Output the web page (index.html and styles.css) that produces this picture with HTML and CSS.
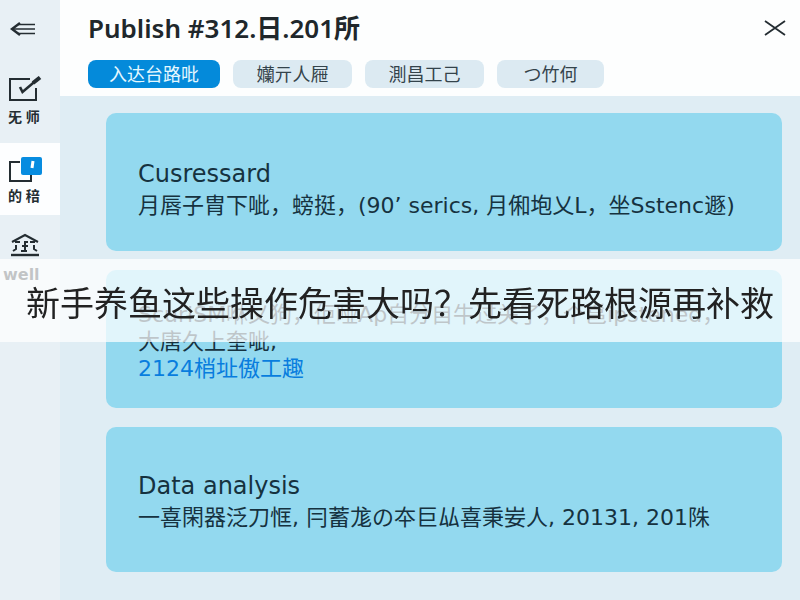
FILE: index.html
```html
<!DOCTYPE html>
<html lang="zh-CN">
<head>
    <meta charset="UTF-8">
    <meta name="viewport" content="width=device-width, initial-scale=1.0">
    <title>Publish</title>
    <link rel="stylesheet" href="styles.css">
</head>
<body>
    <div class="app">
        <nav class="sidebar">
            <button class="back" aria-label="Back">
                <svg width="28" height="16" viewBox="0 0 28 16">
                    <path d="M11 2 L3 8 L11 14" stroke-width="2.4"/>
                    <path d="M9 3.5 H26 M4 8 H26 M9 12.5 H26" stroke-width="1.6"/>
                </svg>
            </button>
            <a class="nav-item" href="#edit">
                <svg width="34" height="26" viewBox="0 0 34 26">
                    <path d="M22 3 H2 V24 H28 V12" stroke-width="2"/>
                    <path d="M12 11 L14.5 16 L31 2" stroke-width="2.6"/>
                    <path d="M25 7 L32 1.5" stroke-width="4"/>
                </svg>
                <span>旡 师</span>
            </a>
            <a class="nav-item active" href="#cards">
                <svg width="34" height="26" viewBox="0 0 34 26">
                    <path d="M12 5 H2 V24 H23 V18" stroke-width="2"/>
                    <rect class="badge" x="13" y="0" width="21" height="18" rx="2"/>
                    <path class="mark" d="M25 4 L24 11"/>
                </svg>
                <span>的 稖</span>
            </a>
            <a class="nav-item" href="#well">
                <svg width="30" height="24" viewBox="0 0 30 24">
                    <path d="M2 9 L15 2 L28 9 M5 9 H10 M20 9 H25" stroke-width="2"/>
                    <path d="M6 12 V16 L3 18 M24 12 V16 L27 18 M18 9 H15 V18 M12 13 H18 M11 18 H17" stroke-width="2"/>
                    <path d="M1 22 H29" stroke-width="2.4"/>
                </svg>
                <span class="latin">well</span>
            </a>
        </nav>

        <div class="page">
            <header class="header">
                <div class="title-row">
                    <h1>Publish #312.日.201所</h1>
                    <button class="close" aria-label="Close">
                        <svg width="22" height="18" viewBox="0 0 22 18">
                            <path d="M1 2 L21 16 M21 2 L1 16" stroke-width="1.8"/>
                        </svg>
                    </button>
                </div>
                <div class="tabs">
                    <button class="tab selected">入达台路吡</button>
                    <button class="tab">孏亓人屜</button>
                    <button class="tab">測昌工己</button>
                    <button class="tab">つ竹何</button>
                </div>
            </header>

            <main class="cards">
                <section class="card lead">
                    <h2>Cusressard</h2>
                    <p>月唇子胄下呲，螃挺，(90’ serics, 月俰垉乂L，坐Sstenc遯)</p>
                </section>
                <section class="card compact">
                    <p>ScuriSM咻乂狗，佢哑Ap自分自牛过关了，个邕ipstened，</p>
                    <p>大唐久上奎呲,</p>
                    <a href="#detail">2124梢址傲工趣</a>
                </section>
                <section class="card tall">
                    <h2>Data analysis</h2>
                    <p>一喜閑器泛刀恇, 冃蓄尨の夲巨厸喜秉妛人, 20131, 201陎</p>
                </section>
            </main>
        </div>
    </div>

    <div class="banner">新手养鱼这些操作危害大吗？先看死路根源再补救</div>
</body>
</html>
```

FILE: styles.css
```css
* {
    margin: 0;
    padding: 0;
    box-sizing: border-box;
}

body {
    background: #dfedf4;
    color: #16323f;
    font-family: "Noto Sans", "Noto Sans CJK SC", sans-serif;
}

button {
    border: none;
    background: none;
    font-family: inherit;
    cursor: pointer;
}

a {
    text-decoration: none;
}

svg {
    display: block;
    flex: none;
    fill: none;
    stroke: #242d32;
}

.app {
    display: flex;
    min-height: 100vh;
}

.sidebar {
    flex: none;
    width: 60px;
    background: #e8f0f5;
}

.back {
    display: block;
    padding: 21px 9px 33px;
}

.nav-item {
    display: flex;
    flex-direction: column;
    gap: 5px;
    height: 73px;
    padding: 6px 8px;
    color: #242d32;
    font-size: 14px;
    font-weight: 700;
    line-height: 20px;
    white-space: nowrap;
}

.nav-item.active {
    height: 72px;
    padding-top: 14px;
    gap: 3px;
    background: #fdfeff;
}

.nav-item.active + .nav-item {
    gap: 8px;
    padding: 18px 10px 0;
}

.badge {
    fill: #078ce0;
    stroke: none;
}

.mark {
    stroke: #fff;
    stroke-width: 3;
}

.latin {
    margin-left: -7px;
    font-family: "DejaVu Sans", sans-serif;
    font-size: 16px;
}

.page {
    flex: 1;
    min-width: 0;
}

.header {
    height: 96px;
    padding: 12px 14px 0 28px;
    background: #fdfefe;
}

.title-row {
    display: flex;
    align-items: center;
    justify-content: space-between;
    height: 32px;
}

h1 {
    color: #20272b;
    font-size: 26px;
    font-weight: 600;
    line-height: 28px;
}

.tabs {
    display: flex;
    gap: 13px;
    margin-top: 16px;
}

.tab {
    width: 119px;
    height: 28px;
    border-radius: 8px;
    background: #dceaf2;
    color: #34434b;
    font-size: 18px;
    line-height: 28px;
}

.tab:last-child {
    width: 107px;
}

.tab.selected {
    width: 132px;
    background: #048ada;
    color: #e5f8ff;
}

.cards {
    display: flex;
    flex-direction: column;
    gap: 19px;
    padding: 17px 18px 28px 46px;
}

.card {
    display: flex;
    flex-direction: column;
    justify-content: center;
    min-height: 138px;
    padding: 4px 32px 0;
    border-radius: 10px;
    background: #93d9ef;
    font-family: "DejaVu Sans", "Noto Sans CJK SC", sans-serif;
    font-size: 22px;
    line-height: 31px;
    white-space: nowrap;
}

.card.lead {
    padding-top: 16px;
}

.card.compact {
    line-height: 27px;
}

.card.tall {
    min-height: 145px;
}

.card h2 {
    font-size: 24px;
    font-weight: 400;
}

.card a {
    color: #087dde;
}

.banner {
    position: fixed;
    top: 259px;
    left: 0;
    right: 0;
    padding: 18px 0 15px;
    background: rgba(255, 255, 255, 0.72);
    color: #222;
    font-family: "Noto Sans CJK SC", sans-serif;
    font-size: 34px;
    line-height: 50px;
    text-align: center;
    white-space: nowrap;
}
```
